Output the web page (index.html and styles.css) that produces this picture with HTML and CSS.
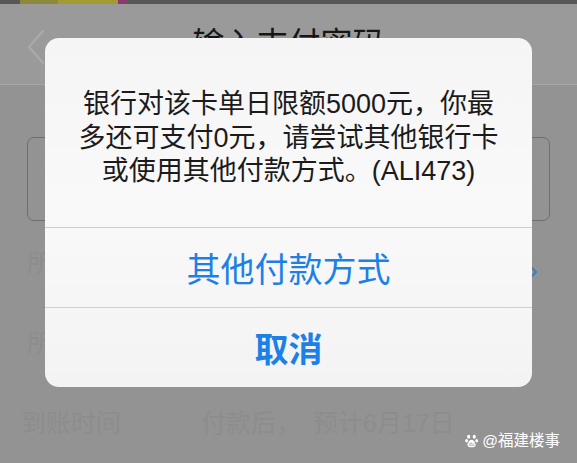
FILE: index.html
```html
<!DOCTYPE html>
<html lang="zh-CN">
<head>
<meta charset="utf-8">
<title>输入支付密码</title>
<link rel="stylesheet" href="styles.css">
</head>
<body>
<div class="screen">
  <div class="status">
    <span class="seg seg-a"></span>
    <span class="seg seg-b"></span>
    <span class="seg seg-c"></span>
  </div>
  <header class="nav">
    <div class="back">
      <svg width="18" height="34" viewBox="0 0 18 34"><path d="M16 1 L2 17 L16 33" fill="none" stroke="#aaaaaa" stroke-width="2.2" stroke-linecap="round" stroke-linejoin="round"/></svg>
    </div>
    <div class="title">输入支付密码</div>
    <div class="nav-right"></div>
  </header>
  <main class="content">
    <div class="pwd-box"></div>
    <div class="row">
      <span class="ghost">所选银行卡</span>
      <svg class="chev" width="8" height="14" viewBox="0 0 8 14"><path d="M1 1 L7 7 L1 13" fill="none" stroke="#3f7fb5" stroke-width="2" stroke-linecap="round"/></svg>
    </div>
    <div class="row">
      <span class="ghost">所需金额</span>
    </div>
    <div class="row row-last">
      <span class="ghost">到账时间</span>
      <span class="ghost ghost-mid">付款后，</span>
      <span class="ghost">预计6月17日</span>
    </div>
  </main>

  <div class="alert">
    <div class="alert-msg">银行对该卡单日限额5000元，你最<br>多还可支付0元，请尝试其他银行卡<br>或使用其他付款方式。(ALI473)</div>
    <div class="alert-btn">其他付款方式</div>
    <div class="alert-btn alert-btn-bold">取消</div>
  </div>

  <div class="watermark">
    <svg width="14" height="14" viewBox="0 0 16 16"><g fill="#ffffff"><ellipse cx="4.2" cy="3.2" rx="1.8" ry="2.3"/><ellipse cx="10.6" cy="3.2" rx="1.8" ry="2.3"/><ellipse cx="1.8" cy="7.8" rx="1.6" ry="2"/><ellipse cx="13.4" cy="7.8" rx="1.6" ry="2"/><path d="M7.5 6.5 C5 6.5 3 10 2.8 12.5 C2.7 14.5 4.5 15.2 7.5 15.2 C10.5 15.2 12.4 14.5 12.2 12.5 C12 10 10 6.5 7.5 6.5 Z"/></g><text x="7.5" y="14" font-size="6" text-anchor="middle" fill="#939393" font-family="Liberation Sans, sans-serif">du</text></svg>
    <span>@福建楼事</span>
  </div>
</div>
</body>
</html>
```

FILE: styles.css
```css
html, body {
  margin: 0;
  padding: 0;
}

body {
  background: #939393;
  font-family: "Liberation Sans", "Noto Sans CJK SC", sans-serif;
}

.screen {
  position: relative;
  width: 577px;
  height: 463px;
  overflow: hidden;
  background: #939393;
}

.status {
  height: 4px;
  background: #575757;
  display: flex;
  padding-left: 20px;
}

.seg {
  display: block;
  height: 4px;
}

.seg-a {
  width: 38px;
  background: #8c8a3a;
}

.seg-b {
  width: 60px;
  background: #a39b30;
}

.seg-c {
  width: 10px;
  background: #8a3a6e;
}

.nav {
  height: 80px;
  background: #9a9a9a;
  border-bottom: 1px solid #a6a6a6;
  display: grid;
  grid-template-columns: 80px 1fr 80px;
  align-items: start;
}

.back {
  padding: 26px 0 0 27px;
}

.back svg {
  display: block;
}

.title {
  text-align: center;
  font-size: 32px;
  line-height: 40px;
  padding-top: 20px;
  color: #161616;
}

.content {
  padding: 0 27px;
}

.pwd-box {
  margin-top: 52px;
  height: 82px;
  border: 1.5px solid #6e6e6e;
  border-radius: 7px;
}

.row {
  height: 80px;
  display: flex;
  align-items: center;
  justify-content: space-between;
}

.row:first-of-type {
  margin-top: 8px;
}

.row-last {
  justify-content: flex-start;
  gap: 0;
  margin-left: -6px;
}

.ghost {
  font-size: 25px;
  color: #8d8d8d;
  white-space: nowrap;
}

.ghost-mid {
  margin-left: 80px;
  margin-right: 12px;
}

.chev {
  margin-right: 13px;
  margin-top: 22px;
}

.alert {
  position: absolute;
  left: 45px;
  top: 38px;
  width: 487px;
  border-radius: 14px;
  background: linear-gradient(#f5f5f5, #f9f9f9 50%, #f3f3f3);
  overflow: hidden;
}

.alert-msg {
  padding: 50px 20px 40px;
  font-size: 27px;
  line-height: 33.5px;
  text-align: center;
  color: #1b1b1b;
  height: 99px;
}

.alert-btn {
  height: 79px;
  border-top: 1px solid #cfcfcf;
  display: flex;
  align-items: center;
  justify-content: center;
  font-size: 34px;
  color: #1d80e6;
}

.alert-btn-bold {
  font-weight: bold;
}

.watermark {
  position: absolute;
  right: 17px;
  bottom: 12px;
  display: flex;
  align-items: center;
  gap: 3px;
  color: #ffffff;
  font-size: 15.5px;
  line-height: 20px;
}

.watermark svg {
  display: block;
}
```
